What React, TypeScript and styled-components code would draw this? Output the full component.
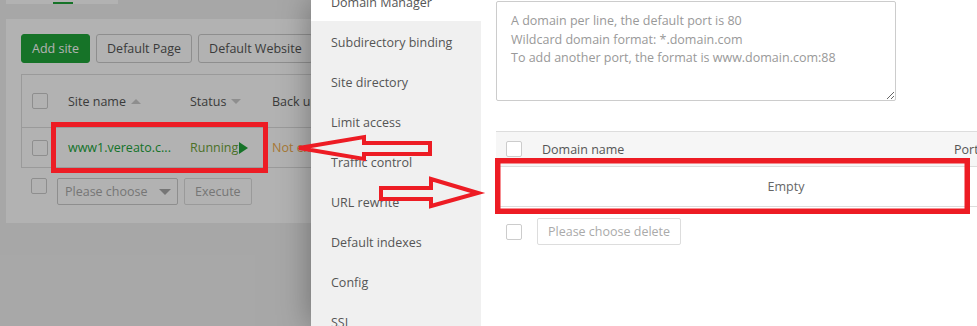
import React from 'react';
import styled, { createGlobalStyle } from 'styled-components';

const GlobalStyle = createGlobalStyle`
  html, body {
    margin: 0;
    padding: 0;
    overflow: hidden;
  }
  body {
    font-family: 'Open Sans', 'Liberation Sans', sans-serif;
    font-size: 12.5px;
    color: #555;
  }
  #root {
    width: 977px;
    height: 326px;
  }
`;

const Screen = styled.div`
  position: relative;
  width: 977px;
  height: 326px;
  overflow: hidden;
  background: #f0f0f0;
`;

const Page = styled.div`
  padding: 0 6px;
`;

const TabStrip = styled.div`
  display: flex;
  align-items: flex-end;
  width: 112px;
  height: 4px;
  padding-left: 47px;
  box-sizing: border-box;
  background: #fff;
`;

const TabMark = styled.div`
  width: 20px;
  height: 2px;
  background: #20a53a;
`;

const MainCard = styled.div`
  width: 600px;
  margin-top: 15px;
  padding: 15px 15px 18px;
  background: #fff;
`;

const Toolbar = styled.div`
  display: flex;
  gap: 6px;
`;

const Button = styled.button<{ $primary?: boolean; $muted?: boolean }>`
  height: 29px;
  padding: 0 10px;
  border: 1px solid ${({ $primary }) => ($primary ? '#20a53a' : '#ccc')};
  border-radius: 3px;
  background: ${({ $primary }) => ($primary ? '#20a53a' : '#fff')};
  color: ${({ $primary, $muted }) => ($primary ? '#fff' : $muted ? '#aaa' : '#555')};
  font-family: inherit;
  font-size: 12.5px;
  white-space: nowrap;
`;

const Table = styled.div`
  width: 560px;
  margin-top: 11px;
  border: 1px solid #ddd;
`;

const Row = styled.div<{ $head?: boolean }>`
  display: grid;
  grid-template-columns: 36px 122px 82px 1fr;
  align-items: center;
  height: ${({ $head }) => ($head ? '52px' : '39px')};
  padding-left: 10px;
  border-bottom: ${({ $head }) => ($head ? '1px solid #ddd' : 'none')};
  white-space: nowrap;
`;

const HeadCell = styled.div`
  display: flex;
  align-items: center;
  gap: 5px;
  color: #555;
`;

const SortMark = styled.span<{ $up?: boolean }>`
  width: 0;
  height: 0;
  border-left: 5px solid transparent;
  border-right: 5px solid transparent;
  border-bottom: ${({ $up }) => ($up ? '5px solid #ccc' : 'none')};
  border-top: ${({ $up }) => ($up ? 'none' : '5px solid #ccc')};
`;

const Checkbox = styled.span`
  display: inline-block;
  width: 14px;
  height: 14px;
  border: 1px solid #ccc;
  border-radius: 2px;
  background: #fff;
`;

const SiteLink = styled.span`
  color: #20a53a;
`;

const Running = styled.span`
  display: flex;
  align-items: center;
  color: #6ea33a;
`;

const PlayMark = styled.span`
  width: 0;
  height: 0;
  margin-left: 1px;
  border-top: 6px solid transparent;
  border-bottom: 6px solid transparent;
  border-left: 9px solid #20a53a;
`;

const Warn = styled.span`
  color: #f0ad4e;
`;

const Footer = styled.div<{ $center?: boolean }>`
  display: flex;
  align-items: ${({ $center }) => ($center ? 'center' : 'flex-start')};
  margin-top: ${({ $center }) => ($center ? '11px' : '10px')};
  padding-left: 10px;
`;

const Select = styled.div`
  display: flex;
  align-items: center;
  justify-content: space-between;
  box-sizing: border-box;
  width: 121px;
  height: 27px;
  margin: 0 6px 0 10px;
  padding: 0 6px 0 7px;
  border: 1px solid #ccc;
  border-radius: 2px;
  color: #aaa;
`;

const Caret = styled.span`
  width: 0;
  height: 0;
  border-left: 6px solid transparent;
  border-right: 6px solid transparent;
  border-top: 6px solid #aaa;
`;

const SmallButton = styled(Button)`
  height: 27px;
  border-radius: 2px;
  border-color: #ddd;
`;

const Mask = styled.div`
  position: absolute;
  inset: 0;
  background: rgba(0, 0, 0, 0.3);
`;

const Drawer = styled.div`
  position: absolute;
  top: 0;
  right: 0;
  bottom: 0;
  width: 666px;
  background: #fff;
  box-shadow: 0 0 30px rgba(0, 0, 0, 0.35);
  overflow: hidden;
`;

const DrawerBody = styled.div`
  display: flex;
  height: calc(100% + 19px);
  margin-top: -19px;
`;

const Sidebar = styled.ul`
  flex-shrink: 0;
  width: 170px;
  margin: 0;
  padding: 0;
  list-style: none;
  background: #f0f0f0;
`;

const SideItem = styled.li<{ $active?: boolean }>`
  height: 40px;
  padding-left: 20px;
  line-height: 44px;
  color: #555;
  background: ${({ $active }) => ($active ? '#fff' : 'transparent')};
  white-space: nowrap;
  overflow: hidden;
`;

const Content = styled.div`
  flex: 1;
  min-width: 0;
  padding: 20px 15px;
`;

const DomainInput = styled.textarea`
  display: block;
  box-sizing: border-box;
  width: 400px;
  height: 100px;
  margin: 0;
  padding: 10px 14px;
  border: 1px solid #ccc;
  border-radius: 2px;
  font-family: inherit;
  font-size: 12.5px;
  line-height: 18.5px;
  &::placeholder {
    color: #999;
  }
`;

const DomainTable = styled.div`
  width: 580px;
  margin-top: 30px;
  border-top: 1px solid #ddd;
`;

const DomainHead = styled.div`
  display: grid;
  grid-template-columns: 36px 412px 1fr;
  align-items: center;
  height: 34px;
  padding-left: 10px;
  background: #f6f6f6;
  border-bottom: 1px solid #ddd;
  color: #555;
  white-space: nowrap;
`;

const EmptyRow = styled.div`
  display: flex;
  align-items: center;
  justify-content: center;
  height: 39px;
  border-bottom: 1px solid #ddd;
  color: #666;
`;

const GhostButton = styled(SmallButton)`
  margin-left: 15px;
`;

const Annotations = styled.svg`
  position: absolute;
  top: 0;
  left: 0;
  pointer-events: none;
`;

const sideItems = [
  'Domain Manager',
  'Subdirectory binding',
  'Site directory',
  'Limit access',
  'Traffic control',
  'URL rewrite',
  'Default indexes',
  'Config',
  'SSL',
];

const placeholder =
  'A domain per line, the default port is 80\nWildcard domain format: *.domain.com\nTo add another port, the format is www.domain.com:88';

const App: React.FC = () => (
  <Screen>
    <GlobalStyle />
    <Page>
      <TabStrip>
        <TabMark />
      </TabStrip>
      <MainCard>
        <Toolbar>
          <Button $primary>Add site</Button>
          <Button>Default Page</Button>
          <Button>Default Website</Button>
        </Toolbar>
        <Table>
          <Row $head>
            <Checkbox />
            <HeadCell>
              Site name <SortMark $up />
            </HeadCell>
            <HeadCell>
              Status <SortMark />
            </HeadCell>
            <HeadCell>Back up</HeadCell>
          </Row>
          <Row>
            <Checkbox />
            <SiteLink>www1.vereato.c...</SiteLink>
            <Running>
              Running
              <PlayMark />
            </Running>
            <Warn>Not exist</Warn>
          </Row>
        </Table>
        <Footer>
          <Checkbox />
          <Select>
            Please choose <Caret />
          </Select>
          <SmallButton $muted>Execute</SmallButton>
        </Footer>
      </MainCard>
    </Page>
    <Mask />
    <Drawer>
      <DrawerBody>
        <Sidebar>
          {sideItems.map((item, i) => (
            <SideItem key={item} $active={i === 0}>
              {item}
            </SideItem>
          ))}
        </Sidebar>
        <Content>
          <DomainInput placeholder={placeholder} />
          <DomainTable>
            <DomainHead>
              <Checkbox />
              <span>Domain name</span>
              <span>Port</span>
            </DomainHead>
            <EmptyRow>Empty</EmptyRow>
          </DomainTable>
          <Footer $center>
            <Checkbox />
            <GhostButton $muted>Please choose delete</GhostButton>
          </Footer>
        </Content>
      </DrawerBody>
    </Drawer>
    <Annotations width="977" height="326" viewBox="0 0 977 326">
      <g fill="none" stroke="#ed1c24" strokeLinejoin="miter">
        <rect x="53.5" y="124.5" width="212" height="46" strokeWidth="5" />
        <rect x="497.75" y="160.75" width="469.5" height="50.5" strokeWidth="5.5" />
        <polygon
          points="299,148 364,137 364,143 430,143 430,154 364,154 364,159"
          strokeWidth="4"
        />
        <polygon
          points="381,188 431,188 431,179 478,193 431,206 431,199 381,199"
          strokeWidth="4"
        />
      </g>
    </Annotations>
  </Screen>
);

export default App;
